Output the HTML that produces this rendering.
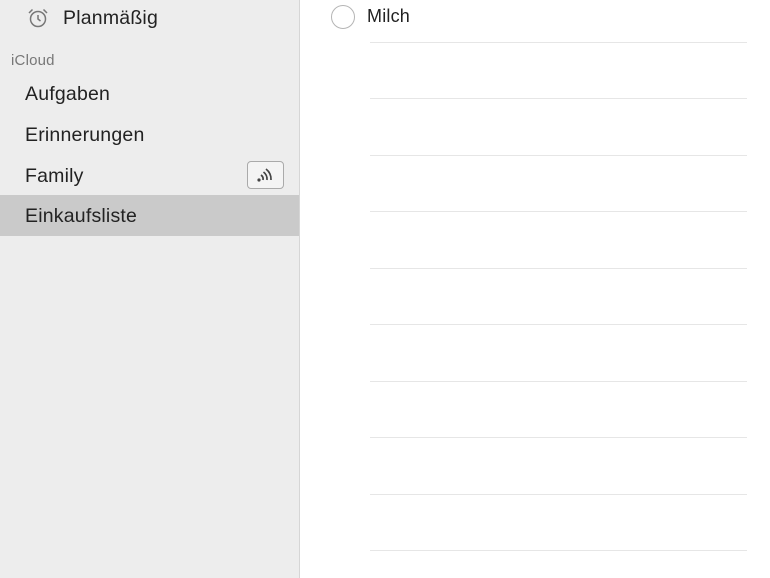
<!DOCTYPE html>
<html><head><style>
body{margin:0;width:770px;height:578px;overflow:hidden;font-family:"Liberation Sans",sans-serif;background:#fff;position:relative}
.sb{position:absolute;left:0;top:0;width:299px;height:578px;background:#ededed;border-right:1px solid #d6d6d6}
.t{position:absolute;font-size:19.5px;color:#222;left:25px;letter-spacing:0.2px}
.line{position:absolute;left:370px;width:377px;height:1px;background:#e6e6e6}
</style></head><body>
<div class="sb">
<svg style="position:absolute;left:25px;top:6px" width="26" height="24" viewBox="0 0 26 24"><circle cx="13" cy="13" r="7.5" fill="none" stroke="#777" stroke-width="1.5"/><path d="M13 9v4l2.5 2M4 7l3.5-3.5M22 7l-3.5-3.5" stroke="#777" stroke-width="1.5" fill="none"/></svg>
<div class="t" style="left:63px;top:7px">Planmäßig</div>
<div class="t" style="left:11px;top:52px;font-size:15px;color:#777">iCloud</div>
<div class="t" style="top:83px">Aufgaben</div>
<div class="t" style="top:124px">Erinnerungen</div>
<div class="t" style="top:165px">Family</div>
<div style="position:absolute;left:247px;top:161px;width:35px;height:26px;border:1px solid #aaa;border-radius:4px;background:#f4f4f4"></div>
<svg style="position:absolute;left:252px;top:163px" width="26" height="22" viewBox="0 0 26 22"><circle cx="7" cy="17" r="1.6" fill="#444"/><path d="M11 17a5 5 0 0 0-2-5M15 17a9 9 0 0 0-3.5-8M19 17a13 13 0 0 0-5-11" stroke="#444" stroke-width="1.7" fill="none"/></svg>
<div style="position:absolute;left:0;top:195px;width:299px;height:41px;background:#cacaca"></div>
<div class="t" style="top:205px">Einkaufsliste</div>
</div>
<div style="position:absolute;left:331px;top:5px;width:22px;height:22px;border:1px solid #b5b5b5;border-radius:50%"></div>
<div class="t" style="left:367px;top:6px;font-size:18px">Milch</div>
<div class="line" style="top:42px"></div><div class="line" style="top:98px"></div><div class="line" style="top:155px"></div><div class="line" style="top:211px"></div><div class="line" style="top:268px"></div><div class="line" style="top:324px"></div><div class="line" style="top:381px"></div><div class="line" style="top:437px"></div><div class="line" style="top:494px"></div><div class="line" style="top:550px"></div>
</body></html>
